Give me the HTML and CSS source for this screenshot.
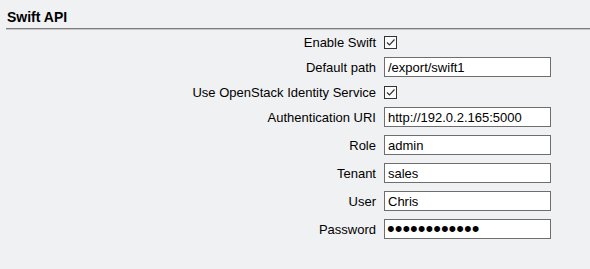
FILE: index.html
```html
<!DOCTYPE html>
<html>
<head>
<meta charset="utf-8">
<link rel="stylesheet" href="styles.css">
</head>
<body>
<div class="panel">
  <h2 class="title">Swift API</h2>
  <div class="form">
    <label class="label row-c">Enable Swift</label>
    <div class="field row-c"><span class="check"><svg width="11" height="11" viewBox="0 0 11 11"><path d="M2 5.5 L4.5 8 L9.5 2.5" fill="none" stroke="#333" stroke-width="1.2"/></svg></span></div>

    <label class="label row-i">Default path</label>
    <div class="field row-i"><input class="text" type="text" value="/export/swift1"></div>

    <label class="label row-c">Use OpenStack Identity Service</label>
    <div class="field row-c"><span class="check"><svg width="11" height="11" viewBox="0 0 11 11"><path d="M2 5.5 L4.5 8 L9.5 2.5" fill="none" stroke="#333" stroke-width="1.2"/></svg></span></div>

    <label class="label row-i">Authentication URI</label>
    <div class="field row-i"><input class="text" type="text" value="http://192.0.2.165:5000"></div>

    <label class="label row-i">Role</label>
    <div class="field row-i"><input class="text" type="text" value="admin"></div>

    <label class="label row-i">Tenant</label>
    <div class="field row-i"><input class="text" type="text" value="sales"></div>

    <label class="label row-i">User</label>
    <div class="field row-i"><input class="text" type="text" value="Chris"></div>

    <label class="label row-i">Password</label>
    <div class="field row-i"><input class="text pass" type="password" value="password1234"></div>
  </div>
</div>
</body>
</html>
```
FILE: styles.css
```css
html, body {
  margin: 0;
  padding: 0;
  background: #f0f1f3;
  font-family: "Liberation Sans", Arial, sans-serif;
  font-size: 13px;
  color: #000;
}
.panel {
  padding-top: 9px;
}
.title {
  margin: 0 0 0 6px;
  padding: 0 0 3px 1px;
  font-size: 14px;
  font-weight: bold;
  line-height: 16px;
  border-bottom: 1px solid #7d7d7d;
  box-shadow: 0 1px 0 #c8c8c8;
}
.form {
  display: grid;
  grid-template-columns: 376px 167px;
  column-gap: 8px;
  padding-top: 2px;
}
.label {
  text-align: right;
  display: flex;
  align-items: center;
  justify-content: flex-end;
}
.field {
  display: flex;
  align-items: center;
}
.row-c { height: 22px; }
.row-i { height: 28px; }
.check {
  box-sizing: border-box;
  width: 13px;
  height: 13px;
  border: 1px solid #333;
  background: #fbfbfb;
  display: flex;
  align-items: center;
  justify-content: center;
}
.check svg { display: block; }
.text {
  box-sizing: border-box;
  width: 167px;
  height: 20px;
  margin: 0;
  padding: 0 3px;
  border: 1px solid #6e6e6e;
  background: #fff;
  font-family: "Liberation Sans", Arial, sans-serif;
  font-size: 13px;
  color: #000;
  outline: none;
}
.pass {
  font-size: 22px;
  line-height: 18px;
  padding: 0 2px;
}
```
